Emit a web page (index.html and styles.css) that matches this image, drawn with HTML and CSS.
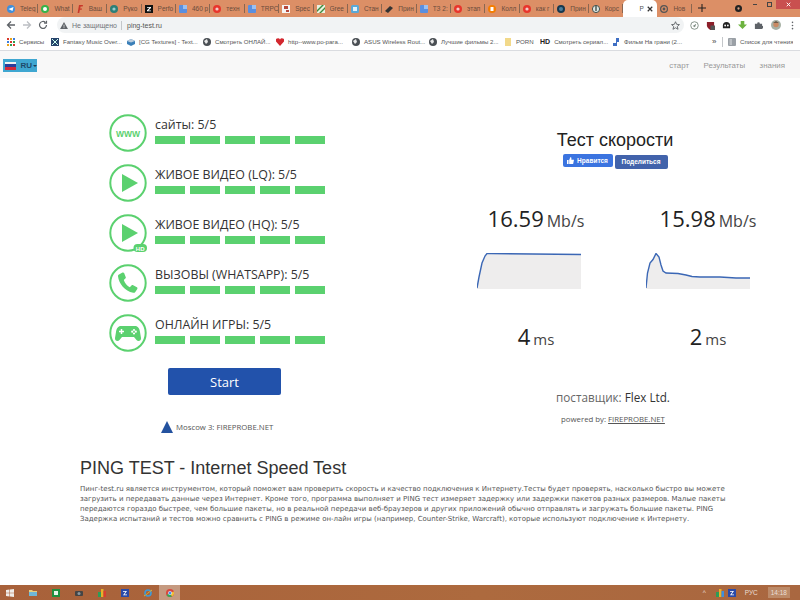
FILE: index.html
```html
<!DOCTYPE html>
<html lang="ru">
<head>
<meta charset="utf-8">
<title>PING TEST</title>
<link rel="stylesheet" href="styles.css">
</head>
<body>
<div class="tabbar">
  <div class="tab"><svg viewBox="0 0 8 8"><circle cx="4" cy="4" r="4" fill="#3f8fdc"/><path d="M1.5 4 6.5 2 5.5 6z" fill="#fff"/></svg><span>Teleg</span></div>
  <div class="tab"><svg viewBox="0 0 8 8"><circle cx="4" cy="4" r="4" fill="#35b44a"/><circle cx="4" cy="4" r="2" fill="#fff"/></svg><span>What</span></div>
  <div class="tab"><svg viewBox="0 0 8 8"><path d="M3 0H7L6.6 1.5H4.6L4.2 3.4H6L5.7 4.8H3.9L3.2 8H1.6z" fill="#c8372a"/></svg><span>Ваш</span></div>
  <div class="tab"><svg viewBox="0 0 8 8"><circle cx="4" cy="4" r="4" fill="#2c7f78"/><circle cx="4" cy="4" r="1.6" fill="#9cc"/></svg><span>Руко</span></div>
  <div class="tab"><svg viewBox="0 0 8 8"><rect width="8" height="8" fill="#111"/><path d="M2 2H6V3L3.4 5.4H6V6.2H2V5.2L4.6 2.8H2z" fill="#fff"/></svg><span>Perfo</span></div>
  <div class="tab"><svg viewBox="0 0 8 8"><rect width="8" height="8" rx="1" fill="#5a8fe0"/><rect width="4" height="4" x="4" fill="#9ac0f2"/></svg><span>460 р</span></div>
  <div class="tab"><svg viewBox="0 0 8 8"><circle cx="4" cy="4" r="4" fill="#e8352c"/><circle cx="4" cy="4" r="1.6" fill="#f6c9c4"/></svg><span>техн</span></div>
  <div class="tab"><svg viewBox="0 0 8 8"><rect width="8" height="8" rx="1" fill="#5a8fe0"/><rect width="4" height="4" x="4" fill="#9ac0f2"/></svg><span>TRPC</span></div>
  <div class="tab"><svg viewBox="0 0 8 8"><rect width="8" height="8" fill="#f4f4f4"/><path d="M2 1H6V4H2zM4 5H7V7H4z" fill="#b5483c"/></svg><span>Spec</span></div>
  <div class="tab"><svg viewBox="0 0 8 8"><rect width="8" height="8" fill="#e9f2e2"/><path d="M0 5 5 0H7L0 7zM2 8 8 2V4L4 8z" fill="#3e8a3c"/></svg><span>Gree</span></div>
  <div class="tab"><svg viewBox="0 0 8 8"><rect width="8" height="8" rx="1.5" fill="#5aa9d8"/><rect x="2" y="2" width="4" height="4" fill="#e3f2fb"/></svg><span>Стан</span></div>
  <div class="tab"><svg viewBox="0 0 8 8"><path d="M0 6 5 1 8 3 3 8z" fill="#333"/></svg><span>Прин</span></div>
  <div class="tab"><svg viewBox="0 0 8 8"><rect width="8" height="8" rx="1" fill="#5a8fe0"/><rect width="4" height="4" x="4" fill="#9ac0f2"/></svg><span>ТЗ 2:</span></div>
  <div class="tab"><svg viewBox="0 0 8 8"><circle cx="4" cy="4" r="4" fill="#e8352c"/><circle cx="4" cy="4" r="1.6" fill="#f6c9c4"/></svg><span>этап</span></div>
  <div class="tab"><svg viewBox="0 0 8 8"><circle cx="4" cy="4" r="4" fill="#f57d00"/><rect x="2.5" y="2" width="3" height="4" fill="#fff"/></svg><span>Колл</span></div>
  <div class="tab"><svg viewBox="0 0 8 8"><circle cx="4" cy="4" r="4" fill="#e8352c"/><circle cx="4" cy="4" r="1.6" fill="#f6c9c4"/></svg><span>как г</span></div>
  <div class="tab"><svg viewBox="0 0 8 8"><circle cx="4" cy="4" r="4" fill="#17384f"/><circle cx="4" cy="4" r="2" fill="#4d7f9c"/></svg><span>Прин</span></div>
  <div class="tab"><svg viewBox="0 0 8 8"><circle cx="4" cy="4" r="3.6" fill="#dfe5e2" stroke="#44524d"/><path d="M4 1V6" stroke="#44524d" stroke-width="1.4"/></svg><span>Корс</span></div>
  <div class="tab tab-active"><span class="tab-p">Р</span><svg class="tab-x" viewBox="0 0 8 8"><path d="M1 1 7 7M7 1 1 7" stroke="#333" stroke-width="1.6"/></svg></div>
  <div class="tab"><svg viewBox="0 0 8 8"><circle cx="4" cy="4" r="3.4" fill="none" stroke="#555" stroke-width="1.2"/><circle cx="4" cy="4" r="1.4" fill="#555"/></svg><span>Нов</span></div>
  <svg class="newtab" viewBox="0 0 9 9"><path d="M4.5 0V9M0 4.5H9" stroke="#222" stroke-width="1.2"/></svg>
  <div class="win">
    <svg class="win-profile" viewBox="0 0 8 8"><circle cx="4" cy="4" r="4" fill="#222"/><circle cx="4" cy="4" r="1.3" fill="#d9a184"/></svg>
    <div class="win-btn"><i class="win-min"></i></div>
    <div class="win-btn"><i class="win-max"></i></div>
    <div class="win-btn win-close"><svg viewBox="0 0 7 7"><path d="M1 1 6 6M6 1 1 6" stroke="#fff" stroke-width="1.3"/></svg></div>
  </div>
</div>

<div class="addr">
  <svg class="nav-ico" viewBox="0 0 10 10"><path d="M9 5H2M5 1.5 1.5 5 5 8.5" fill="none" stroke="#5f6368" stroke-width="1.3"/></svg>
  <svg class="nav-ico" viewBox="0 0 10 10"><path d="M1 5H8M5 1.5 8.5 5 5 8.5" fill="none" stroke="#bcbfc3" stroke-width="1.3"/></svg>
  <svg class="nav-ico" viewBox="0 0 10 10"><path d="M8.5 5A3.5 3.5 0 1 1 7.4 2.4M8.5 .8V3.2H6.1" fill="none" stroke="#5f6368" stroke-width="1.2"/></svg>
  <div class="omni">
    <svg class="warn" viewBox="0 0 9 8"><path d="M4.5 0 9 8H0z" fill="#5f6368"/><path d="M4.5 3V5.4M4.5 6V7" stroke="#f1f3f4" stroke-width=".9"/></svg>
    <span class="omni-note">Не защищено</span>
    <span class="omni-sep"></span>
    <span class="omni-url">ping-test.ru</span>
    <svg class="star" viewBox="0 0 10 10"><path d="M5 .8 6.3 3.7 9.4 4 7 6.1 7.8 9.2 5 7.5 2.2 9.2 3 6.1 .6 4 3.7 3.7z" fill="none" stroke="#5f6368"/></svg>
  </div>
  <div class="exts">
    <svg viewBox="0 0 10 10"><circle cx="5" cy="5" r="4.2" fill="none" stroke="#7c8a80"/><path d="M3 5.5 7 3 5.5 7z" fill="#7c8a80"/></svg>
    <svg viewBox="0 0 10 10"><path d="M1 1H9V5C9 8 5 10 5 10S1 8 1 5z" fill="#8c1f2a"/><rect x="5" y="5" width="5" height="5" fill="#555"/></svg>
    <svg viewBox="0 0 10 10"><path d="M1 5A4 4 0 0 1 9 5V8H1z" fill="#222"/><circle cx="3.5" cy="5" r="1" fill="#fff"/><circle cx="6.5" cy="5" r="1" fill="#fff"/></svg>
    <svg viewBox="0 0 10 10"><path d="M3 0H7V4H10L5 9 0 4H3z" fill="#6db33f"/></svg>
    <svg viewBox="0 0 10 10"><path d="M1 3H3.5A1.5 1.5 0 0 1 6.500 3H9V5.200A1.500 1.500 0 0 1 9 8.200V9H1z" fill="#5f6368"/></svg>
    <svg class="avatar" viewBox="0 0 10 10"><circle cx="5" cy="5" r="5" fill="#a7b1a4"/><circle cx="5" cy="4.500" r="2.700" fill="#c98a62"/><path d="M2 3 5 1 8 3z" fill="#6b5a48"/></svg>
    <svg class="dots" viewBox="0 0 3 10"><circle cx="1.500" cy="1.500" r=".9" fill="#5f6368"/><circle cx="1.500" cy="5" r=".9" fill="#5f6368"/><circle cx="1.500" cy="8.500" r=".9" fill="#5f6368"/></svg>
  </div>
</div>

<div class="bookmarks">
  <div class="bm bm-apps"><svg viewBox="0 0 8 8"><path d="M0 0H2V2H0z" fill="#d8382c"/><path d="M3 0H5V2H3z" fill="#e8a31c"/><path d="M6 0H8V2H6z" fill="#3a7de0"/><path d="M0 3H2V5H0z" fill="#3a7de0"/><path d="M3 3H5V5H3z" fill="#d8382c"/><path d="M6 3H8V5H6z" fill="#2e9e4f"/><path d="M0 6H2V8H0z" fill="#e8a31c"/><path d="M3 6H5V8H3z" fill="#2e9e4f"/><path d="M6 6H8V8H6z" fill="#d8382c"/></svg><span>Сервисы</span></div>
  <div class="bm bm-fantasy"><svg viewBox="0 0 8 8"><rect width="8" height="8" fill="#26436b"/><path d="M1 1 7 7M7 1 1 7" stroke="#cfe" stroke-width="1"/></svg><span>Fantasy Music Over...</span></div>
  <div class="bm bm-cg"><svg viewBox="0 0 8 8"><path d="M0 3 4 1 8 3V6L4 8 0 6z" fill="#3a7fb8"/><path d="M0 3 4 1 8 3 4 4.500z" fill="#bcd"/></svg><span>[CG Textures] - Text...</span></div>
  <div class="bm bm-watch"><svg viewBox="0 0 8 8"><circle cx="4" cy="4" r="4" fill="#4a4f54"/><path d="M1 3 4 1 5 4 3 6z" fill="#e8e8e8"/></svg><span>Смотреть ОНЛАЙ...</span></div>
  <div class="bm bm-http"><svg viewBox="0 0 8 8"><path d="M4 8 0 3.500A2.200 2.200 0 0 1 4 1.500 2.200 2.200 0 0 1 8 3.500z" fill="#d3272f"/></svg><span>http--www.po-para...</span></div>
  <div class="bm bm-asus"><svg viewBox="0 0 8 8"><circle cx="4" cy="4" r="4" fill="#4a4f54"/><path d="M1 3 4 1 5 4 3 6z" fill="#e8e8e8"/></svg><span>ASUS Wireless Rout...</span></div>
  <div class="bm bm-best"><svg viewBox="0 0 8 8"><circle cx="4" cy="4" r="4" fill="#4a4f54"/><path d="M1 3 4 1 5 4 3 6z" fill="#e8e8e8"/></svg><span>Лучшие фильмы 2...</span></div>
  <div class="bm bm-porn"><svg viewBox="0 0 8 8"><path d="M1 0H7V8H1z" fill="#f2d98a"/></svg><span>PORN</span></div>
  <div class="bm bm-hd"><b>HD</b><span>Смотреть сериал...</span></div>
  <div class="bm bm-film"><svg viewBox="0 0 8 8"><path d="M4 0H7V4H5V8H1V5H4z" fill="#3f6fc4"/></svg><span>Фильм На грани (2...</span></div>
  <div class="bm-more">»</div>
  <div class="bm-sep"></div>
  <div class="bm bm-list"><svg viewBox="0 0 8 8"><rect width="8" height="8" rx="1" fill="#9aa0a6"/><path d="M1.500 2H4M1.500 4H4M1.500 6H4" stroke="#fff" stroke-width=".7"/></svg><span>Список для чтения</span></div>
</div>

<nav class="sitenav">
  <div class="lang">
    <span class="flag"><i class="flag-w"></i><i class="flag-b"></i><i class="flag-r"></i></span>
    <span class="lang-code">RU</span><i class="caret"></i>
  </div>
  <div class="links"><a>старт</a><a>Результаты</a><a>знания</a></div>
</nav>

<main class="page">
  <section class="test">
    <div class="tests">
      <div class="row">
        <svg class="ring" viewBox="0 0 38 38"><circle cx="19" cy="19" r="17.700" fill="none" stroke="#5bd16f" stroke-width="2"/><text x="19" y="22.500" text-anchor="middle" class="www">WWW</text></svg>
        <div class="meas"><div class="label">сайты: 5/5</div><div class="bars"><i></i><i></i><i></i><i></i><i></i></div></div>
      </div>
      <div class="row">
        <svg class="ring" viewBox="0 0 38 38"><circle cx="19" cy="19" r="17.700" fill="none" stroke="#5bd16f" stroke-width="2"/><path d="M13 10 29 19 13 28z" fill="#5bd16f"/></svg>
        <div class="meas"><div class="label">ЖИВОЕ ВИДЕО (LQ): 5/5</div><div class="bars"><i></i><i></i><i></i><i></i><i></i></div></div>
      </div>
      <div class="row">
        <svg class="ring" viewBox="0 0 38 38"><circle cx="19" cy="19" r="17.700" fill="none" stroke="#5bd16f" stroke-width="2"/><path d="M13 10 29 19 13 28z" fill="#5bd16f"/><rect x="24.500" y="30" width="13.500" height="8" rx="4" fill="#5bd16f"/><text x="31.200" y="36.500" text-anchor="middle" class="hd">HD</text></svg>
        <div class="meas"><div class="label">ЖИВОЕ ВИДЕО (HQ): 5/5</div><div class="bars"><i></i><i></i><i></i><i></i><i></i></div></div>
      </div>
      <div class="row">
        <svg class="ring" viewBox="0 0 38 38"><circle cx="19" cy="19" r="17.700" fill="none" stroke="#5bd16f" stroke-width="2"/><path d="M10 10.500 13.500 8.500C14.300 8.200 14.800 8.500 15.100 9.100L16.700 13C17 13.700 16.800 14.200 16.300 14.600L14.800 15.900C15.800 18.900 18 21.600 20.800 23.200L22.500 21.500C23 21 23.600 21 24.200 21.300L27.900 23.300C28.500 23.700 28.600 24.300 28.300 24.900L26.300 28C25.800 28.800 25 29 24.100 28.800C15.900 27 9.800 19.800 9 12.200 8.900 11.400 9.300 10.900 10 10.500Z" fill="#5bd16f"/></svg>
        <div class="meas"><div class="label">ВЫЗОВЫ (WHATSAPP): 5/5</div><div class="bars"><i></i><i></i><i></i><i></i><i></i></div></div>
      </div>
      <div class="row">
        <svg class="ring" viewBox="0 0 38 38"><circle cx="19" cy="19" r="17.700" fill="none" stroke="#5bd16f" stroke-width="2"/><path d="M12 12H26C29 12 30.500 14.500 31 18L32 24C32.400 27 29 28 27.500 26L25 23H13L10.500 26C9 28 5.600 27 6 24L7 18C7.500 14.500 9 12 12 12Z" fill="#5bd16f"/><path d="M12.500 15V20M10 17.500H15" stroke="#fff" stroke-width="1.500"/><circle cx="25" cy="16" r="1.100" fill="#fff"/><circle cx="25" cy="19.500" r="1.100" fill="#fff"/><circle cx="23.200" cy="17.700" r="1.100" fill="#fff"/><circle cx="26.800" cy="17.700" r="1.100" fill="#fff"/></svg>
        <div class="meas"><div class="label">ОНЛАЙН ИГРЫ: 5/5</div><div class="bars"><i></i><i></i><i></i><i></i><i></i></div></div>
      </div>
    </div>
    <button class="start">Start</button>
    <div class="server"><svg viewBox="0 0 12 12"><path d="M6 0 12 12H0z" fill="#24529f"/></svg><span>Moscow 3: FIREPROBE.NET</span></div>
  </section>

  <section class="speed">
    <h2 class="speed-title">Тест скорости</h2>
    <div class="social">
      <span class="fb-like"><svg viewBox="0 0 8 8"><path d="M0 3.500H1.800V8H0zM2.500 3.500 4 0C5 0 5.200 1 5 3H8L7 8H2.500z" fill="#fff"/></svg>Нравится</span>
      <span class="fb-share">Поделиться</span>
    </div>
    <div class="results">
      <div class="res">
        <div class="val"><b>16.59</b><span>Mb/s</span></div>
        <svg class="chart chart-down" viewBox="0 0 104 36"><path d="M0 35 2 24 5 10 8 3 10 0.500 14 0.500 104 1.500V36H0z" fill="#eeeded"/><path d="M0 35 2 24 5 10 8 3 10 0.500 14 0.500 104 1.500" fill="none" stroke="#3b67b5" stroke-width="1.400"/></svg>
        <div class="val val-ms"><b>4</b><span>ms</span></div>
      </div>
      <div class="res">
        <div class="val"><b>15.98</b><span>Mb/s</span></div>
        <svg class="chart chart-up" viewBox="0 0 104 36"><path d="M0 35 1.500 20 4 10 7 6.500 10 0.500 13 4 15 12 17 18 20 20 32 20.500 40 22 46 23.500 54 24 74 24 90 25 104 25V36H0z" fill="#eeeded"/><path d="M0 35 1.500 20 4 10 7 6.500 10 0.500 13 4 15 12 17 18 20 20 32 20.500 40 22 46 23.500 54 24 74 24 90 25 104 25" fill="none" stroke="#3b67b5" stroke-width="1.400"/></svg>
        <div class="val val-ms"><b>2</b><span>ms</span></div>
      </div>
    </div>
    <div class="provider">поставщик: <em>Flex Ltd.</em></div>
    <div class="powered">powered by: <u>FIREPROBE.NET</u></div>
  </section>
</main>

<section class="about">
  <h1>PING TEST - Internet Speed Test</h1>
  <p>Пинг-test.ru является инструментом, который поможет вам проверить скорость и качество подключения к Интернету.Тесты будет проверять, насколько быстро вы можете<br>загрузить и передавать данные через Интернет. Кроме того, программа выполняет и PING тест измеряет задержку или задержки пакетов разных размеров. Малые пакеты<br>передаются гораздо быстрее, чем большие пакеты, но в реальной передачи веб-браузеров и других приложений обычно отправлять и загружать большие пакеты. PING<br>Задержка испытаний и тестов можно сравнить с PING в режиме он-лайн игры (например, Counter-Strike, Warcraft), которые используют подключение к Интернету.</p>
</section>

<footer class="taskbar">
  <div class="task-left">
    <svg viewBox="0 0 8 8"><path d="M0 1 3.500 .5V3.800H0zM4 .4 8 0V3.800H4zM0 4.200H3.500V7.500L0 7zM4 4.200H8V8L4 7.600z" fill="#f0ece8"/></svg>
    <svg viewBox="0 0 8 8"><path d="M0 1H3L4 2H8V7H0z" fill="#e8cf7e"/><rect y="3" width="8" height="4" fill="#6fb7d8"/></svg>
    <svg viewBox="0 0 8 8"><rect width="8" height="8" fill="#1f8f3e"/><rect x="2" y="2" width="4" height="4" fill="#e8f5ea"/></svg>
    <svg viewBox="0 0 8 8"><rect y="2" width="8" height="5" rx="1" fill="#444"/><circle cx="4" cy="4.500" r="1.500" fill="#8a97a0"/></svg>
    <svg viewBox="0 0 8 8"><rect y="3" width="3" height="5" fill="#2d9c57"/><rect x="3" width="2.500" height="8" fill="#e8b02a"/><rect x="5.500" y="2" width="2.500" height="6" fill="#d6402f"/></svg>
    <svg class="task-z" viewBox="0 0 8 8"><rect width="8" height="8" fill="#2a4aa8"/><path d="M2 2H6L3.500 5.500H6V6.200H2L4.500 2.800H2z" fill="#fff"/></svg>
    <svg viewBox="0 0 8 8"><circle cx="4" cy="4" r="3" fill="none" stroke="#3d9ad8" stroke-width="1.600"/><path d="M0 7C2 6 5 3 8 1" stroke="#e8b02a" stroke-width="1"/></svg>
    <div class="task-active"><svg viewBox="0 0 8 8"><circle cx="4" cy="4" r="4" fill="#d9483b"/><path d="M4 4 .5 6A4 4 0 0 0 6 7.500z" fill="#3aa655"/><path d="M4 4 6 7.500A4 4 0 0 0 7.600 2.500z" fill="#f0c136"/><circle cx="4" cy="4" r="1.700" fill="#4a8cf0" stroke="#fff" stroke-width=".5"/></svg></div>
  </div>
  <div class="task-right">
    <span class="tray-up">^</span>
    <svg viewBox="0 0 8 8"><rect y="3" width="3" height="5" fill="#2d9c57"/><rect x="3" width="2.500" height="8" fill="#e8b02a"/><rect x="5.500" y="2" width="2.500" height="6" fill="#3f8fdc"/></svg>
    <svg class="task-z" viewBox="0 0 8 8"><rect width="8" height="8" fill="#2a4aa8"/><path d="M2 2H6L3.500 5.500H6V6.200H2L4.500 2.800H2z" fill="#fff"/></svg>
    <span class="tray-lang">РУС</span>
    <span class="tray-time">14:18</span>
  </div>
</footer>
</body>
</html>
```
FILE: styles.css
```css
* { box-sizing: border-box; }
html, body { margin: 0; height: 100%; }
body {
  width: 800px;
  height: 600px;
  overflow: hidden;
  display: flex;
  flex-direction: column;
  background: #fff;
  font-family: "Open Sans", "Noto Sans", sans-serif;
  color: #222;
}

/* tabs */
.tabbar {
  height: 17px;
  flex: none;
  display: flex;
  padding-left: 4px;
  background: #dc8f66;
  font: 6.500px "Liberation Sans", sans-serif;
  color: #6a4c3c;
}
.tab {
  width: 34.400px;
  height: 17px;
  display: flex;
  align-items: center;
  gap: 5px;
  padding-left: 3px;
  overflow: hidden;
  white-space: nowrap;
  background: linear-gradient(#8a6650, #8a6650) right 4px / 1px 9px no-repeat;
}
.tab > svg { width: 8px; height: 8px; flex: none; }
.tab span { width: 17px; overflow: hidden; flex: none; }
.tab-active {
  background: #fff;
  border-radius: 5px 5px 0 0;
  justify-content: flex-end;
  padding-right: 4px;
  gap: 3px;
  color: #555;
}
.tab-active .tab-p { width: 5px; }
.tab > .tab-x { width: 6px; height: 6px; }
.newtab { width: 8px; height: 8px; margin: 4px 0 0 6px; flex: none; }
.win { margin-left: auto; display: flex; align-items: flex-start; }
.win-profile { width: 7px; height: 7px; margin: 5px 6px 0 0; }
.win-btn {
  width: 14px;
  height: 9px;
  display: flex;
  align-items: center;
  justify-content: center;
}
.win-min { width: 4px; height: 1px; background: #444; }
.win-max { width: 5px; height: 5px; border: 1px solid #444; }
.win-close { width: 24px; background: #c9504f; }
.win-close svg { width: 5px; height: 5px; }

/* address bar */
.addr {
  height: 16px;
  flex: none;
  display: flex;
  align-items: center;
  padding-left: 6px;
  background: #fff;
}
.nav-ico { width: 10px; height: 10px; margin-right: 6px; flex: none; }
.omni {
  width: 627px;
  height: 16px;
  margin-left: 3px;
  padding: 0 2px 0 3px;
  display: flex;
  align-items: center;
  background: #f1f3f4;
  border-radius: 8px;
  font: 7px "Liberation Sans", sans-serif;
}
.warn { width: 8px; height: 7px; flex: none; }
.omni-note { margin-left: 4px; color: #70757a; }
.omni-sep { width: 1px; height: 9px; margin: 0 5px 0 4px; background: #c4c7ca; }
.omni-url { color: #555; }
.star { width: 9px; height: 9px; margin-left: auto; margin-right: 2px; }
.exts { display: flex; align-items: center; gap: 7px; margin-left: 6px; }
.exts svg { width: 9px; height: 9px; flex: none; }
.exts .avatar { width: 10px; height: 10px; margin-left: 1px; }
.exts .dots { width: 3px; height: 9px; margin-left: 3px; }

/* bookmarks */
.bookmarks {
  height: 18px;
  flex: none;
  display: flex;
  align-items: center;
  padding-left: 7px;
  border-bottom: 1px solid #dadce0;
  background: #fff;
  font: 6.100px "Liberation Sans", sans-serif;
  color: #555;
  white-space: nowrap;
}
.bm { display: flex; align-items: center; gap: 4px; flex: none; overflow: hidden; }
.bm svg { width: 8px; height: 8px; flex: none; }
.bm-apps { width: 44px; }
.bm-fantasy { width: 76px; }
.bm-cg { width: 76px; }
.bm-watch { width: 73px; }
.bm-http { width: 76px; }
.bm-asus { width: 77px; }
.bm-best { width: 75px; }
.bm-porn { width: 36px; }
.bm-hd { width: 72px; }
.bm-hd b { font-size: 7px; color: #222; }
.bm-film { width: 100px; }
.bm-more { width: 8px; color: #444; font-size: 8px; }
.bm-sep { width: 1px; height: 10px; margin: 0 5px 0 2px; background: #c4c7ca; }

/* site nav */
.sitenav {
  height: 27px;
  flex: none;
  display: flex;
  justify-content: space-between;
  align-items: flex-start;
  padding: 8px 15px 0 3px;
  background: #f8f8f8;
}
.lang {
  width: 34px;
  height: 13px;
  display: flex;
  align-items: center;
  padding-left: 2px;
  background: #3fa7d1;
  font: bold 8px "Liberation Sans", sans-serif;
  color: #1e4a6a;
}
.flag { width: 12px; height: 8px; display: flex; flex-direction: column; margin-right: 4px; }
.flag i { flex: 1; }
.flag-w { background: #f3f3f3; }
.flag-b { background: #2b3f9c; }
.flag-r { background: #d32b3a; }
.caret {
  margin-left: 1px;
  border: 2px solid transparent;
  border-top-color: #1e3a55;
  border-bottom: 0;
}
.links { display: flex; gap: 14.500px; font: 7.900px "Liberation Sans", sans-serif; color: #999; padding-top: 2px; }

/* test */
.page { display: flex; flex: none; height: 376px; }
.test { width: 432px; padding: 36px 0 0 109px; flex: none; }
.row { display: flex; height: 50px; }
.ring { width: 38px; height: 38px; flex: none; overflow: visible; }
.www { font: bold 8.500px "Liberation Sans", sans-serif; fill: #5bd16f; }
.hd { font: bold 6px "Liberation Sans", sans-serif; fill: #fff; }
.meas { margin-left: 8px; width: 170px; }
.label { height: 22px; font-size: 12.400px; line-height: 22px; color: #333; white-space: nowrap; }
.bars { display: flex; gap: 5px; }
.bars i { width: 30px; height: 8px; background: #5bd16f; }
.start {
  display: block;
  width: 113px;
  height: 27px;
  margin: 4px 0 0 59px;
  border: 0;
  border-radius: 2px;
  background: #2252ab;
  color: #fff;
  font: 13px "Open Sans", sans-serif;
}
.server {
  display: flex;
  align-items: center;
  gap: 3px;
  margin: 26px 0 0 52px;
  font-size: 7.800px;
  color: #555;
  white-space: nowrap;
}
.server svg { width: 12px; height: 12px; flex: none; }

/* speed */
.speed { width: 362px; flex: none; padding-top: 50px; text-align: center; }
.speed-title { margin: 0 0 0 4px; font: 18px/24px "Liberation Sans", sans-serif; color: #222; }
.social { display: flex; justify-content: center; gap: 2px; margin: 2px 0 0 4px; height: 15px; font: bold 6.500px "Liberation Sans", sans-serif; color: #fff; }
.fb-like {
  width: 50px;
  height: 13px;
  display: flex;
  align-items: center;
  justify-content: center;
  gap: 3px;
  background: #3b74e0;
  border-radius: 2px;
}
.fb-like svg { width: 7px; height: 7px; }
.fb-share {
  width: 53px;
  height: 14px;
  margin-top: 1px;
  line-height: 14px;
  background: #4263ab;
  border-radius: 2px;
}
.results { display: grid; grid-template-columns: 172px 172px; padding-left: 18px; margin-top: 33px; text-align: left; }
.res { display: flex; flex-direction: column; }
.val {
  display: flex;
  align-items: baseline;
  justify-content: center;
  gap: 3px;
  height: 32px;
  color: #222;
}
.val b { font-weight: 400; font-size: 22px; line-height: 32px; }
.val span { font-size: 16px; color: #444; }
.chart { width: 104px; height: 36px; margin-top: 19px; display: block; }
.chart-down { margin-left: 27px; }
.chart-up { margin-left: 24px; }
.val-ms { margin-top: 31px; }
.val-ms span { font-size: 15px; }
.provider { margin-top: 37px; font-size: 11.700px; color: #666; }
.provider em { font-style: normal; color: #333; }
.powered { margin-top: 9px; font-size: 7.800px; color: #555; }

/* about */
.about { flex: none; height: 131px; padding-left: 80px; }
.about h1 { margin: 0; padding-top: 4px; font: 18px/20px "Liberation Sans", sans-serif; color: #333; }
.about p {
  margin: 6px 0 0;
  font: 7px/10px "DejaVu Sans", sans-serif;
  color: #555;
  white-space: nowrap;
}

/* taskbar */
.taskbar {
  height: 15px;
  flex: none;
  display: flex;
  justify-content: space-between;
  align-items: center;
  background: linear-gradient(90deg, #a8613a, #ad6a3e 60%, #a96740);
  font: 6.500px "Liberation Sans", sans-serif;
  color: #eadfd6;
}
.task-left { display: flex; align-items: center; gap: 15px; padding-left: 6px; }
.task-left svg { width: 8px; height: 8px; flex: none; }
.task-active {
  width: 21px;
  height: 15px;
  margin-left: -8px;
  display: flex;
  align-items: center;
  justify-content: center;
  background: #c59a80;
}
.task-right { display: flex; align-items: center; gap: 4px; padding-right: 10px; }
.task-right svg { width: 8px; height: 8px; flex: none; }
.tray-up { margin-right: 6px; }
.tray-lang { margin: 0 6px 0 5px; }
.tray-time { padding: 2px 3px; background: #bc8a68; }
```
